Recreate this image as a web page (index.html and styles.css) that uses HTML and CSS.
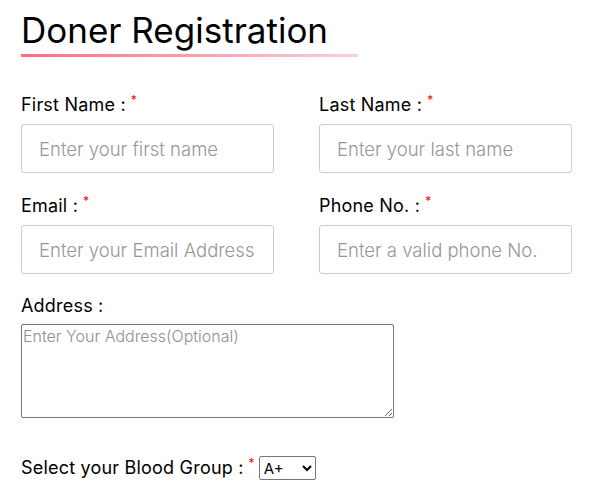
FILE: index.html
```html
<!DOCTYPE html>
<html lang="en">
<head>
<meta charset="utf-8">
<title>Doner Registration</title>
<link rel="stylesheet" href="styles.css">
</head>
<body>
<main class="page">
  <h1 class="title">Doner Registration</h1>
  <form class="form">
    <div class="grid">
      <div class="field">
        <label class="label">First Name :<span class="req">*</span></label>
        <input class="input" type="text" placeholder="Enter your first name">
      </div>
      <div class="field">
        <label class="label">Last Name :<span class="req">*</span></label>
        <input class="input" type="text" placeholder="Enter your last name">
      </div>
      <div class="field">
        <label class="label">Email :<span class="req">*</span></label>
        <input class="input" type="email" placeholder="Enter your Email Address">
      </div>
      <div class="field">
        <label class="label">Phone No. :<span class="req">*</span></label>
        <input class="input" type="tel" placeholder="Enter a valid phone No.">
      </div>
    </div>
    <div class="field address">
      <label class="label">Address :</label>
      <textarea class="textarea" placeholder="Enter Your Address(Optional)"></textarea>
    </div>
    <div class="blood">
      <label class="label">Select your Blood Group :<span class="req">*</span></label>
      <select class="select">
        <option>A+</option>
        <option>A-</option>
        <option>B+</option>
        <option>B-</option>
        <option>AB+</option>
        <option>AB-</option>
        <option>O+</option>
        <option>O-</option>
      </select>
    </div>
  </form>
</main>
</body>
</html>
```
FILE: styles.css
```css
* { box-sizing: border-box; }
html, body { margin: 0; padding: 0; background: #fff; }
body {
  font-family: Inter, "Noto Sans", sans-serif;
  color: #000;
}
.page {
  padding: 10px 21px 0;
}
.title {
  display: inline-block;
  margin: 0;
  font-size: 35px;
  font-weight: 400;
  line-height: 41px;
  padding-bottom: 9px;
  width: 337px;
}
.title::after {
  content: "";
  display: block;
  height: 3px;
  width: 337px;
  margin-top: 3px;
  background: linear-gradient(90deg, #ff6b81 0%, #f9a3b0 55%, #f8d2d8 100%);
}
.form { margin-top: 27px; }
.grid {
  display: grid;
  grid-template-columns: 253px 253px;
  column-gap: 45px;
  row-gap: 21px;
}
.field { display: flex; flex-direction: column; }
.label {
  font-size: 18px;
  line-height: 24px;
  height: 24px;
  letter-spacing: 0.2px;
  margin-bottom: 7px;
}
.req {
  color: #f00;
  font-size: 12px;
  vertical-align: top;
  position: relative;
  top: -5px;
  margin-left: 5px;
}
.input {
  height: 49px;
  width: 253px;
  border: 1px solid #cbcbcb;
  border-radius: 3px;
  padding: 0 10px 0 17px;
  font-family: inherit;
  font-size: 18.5px;
  font-weight: 300;
  color: #333;
  outline: none;
}
.input::placeholder { color: #979797; }
.address { margin-top: 20px; }
.address .label { margin-bottom: 6px; }
.textarea {
  width: 373px;
  height: 94px;
  border: 1px solid #767676;
  border-radius: 2px;
  padding: 1px;
  font-family: inherit;
  font-size: 16px;
  font-weight: 300;
  resize: vertical;
}
.textarea::placeholder { color: #8f8f8f; }
.blood {
  margin-top: 38px;
  display: flex;
  align-items: center;
}
.blood .label { margin: 0 4px 0 0; }
.select {
  height: 24px;
  width: 57px;
  font-family: inherit;
  font-size: 15px;
  border: 1px solid #767676;
  border-radius: 2px;
  background: #fff;
  color: #000;
}
```
